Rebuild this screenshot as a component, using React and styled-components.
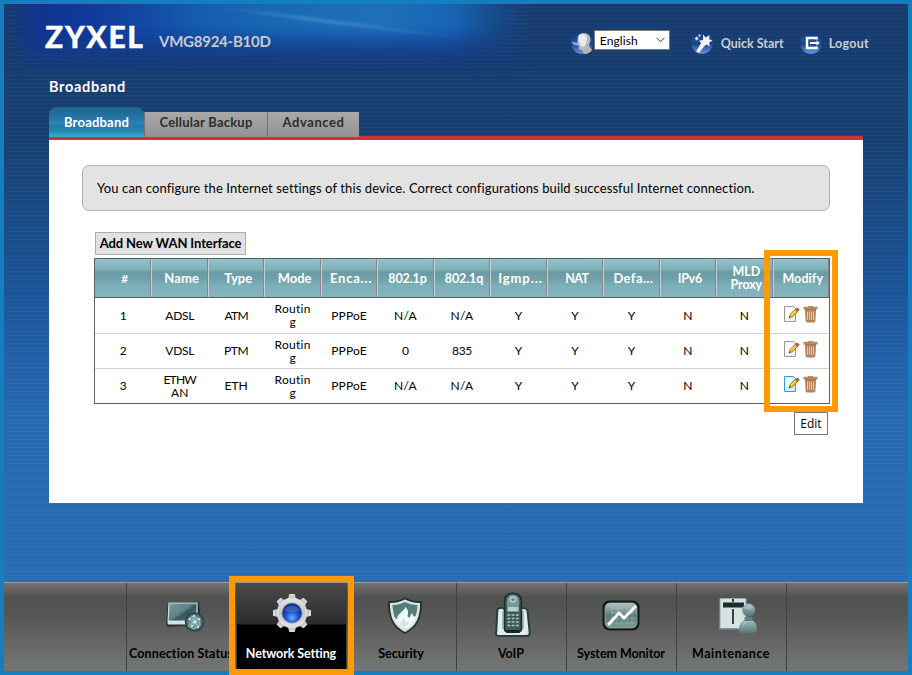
import React from "react";
import styled, { createGlobalStyle, css } from "styled-components";

const Global = createGlobalStyle`
  * { box-sizing: border-box; }
  body { margin: 0; font-family: "Century Gothic", Lato, "Open Sans", sans-serif; font-size: 12px; color: #000; }
  svg { display: block; flex: none; }
`;

const Screen = styled.div`
  width: 912px;
  height: 675px;
  display: flex;
  flex-direction: column;
  border: 4px solid #157ebf;
  background:
    repeating-linear-gradient(180deg, rgba(255, 255, 255, 0) 0 3px, rgba(255, 255, 255, 0.03) 3px 4px) padding-box,
    linear-gradient(180deg, #183c6f 0, #163f70 130px, #1c559a 290px, #276ab4 420px, #286cb5 578px) padding-box;
`;

const Text = styled.span`
  font-size: ${(p) => p.$size || 12}px;
  font-weight: ${(p) => (p.$bold ? 700 : 400)};
  letter-spacing: ${(p) => p.$track || 0}px;
  line-height: 13px;
  white-space: nowrap;
`;

const Header = styled.header`
  position: relative;
  isolation: isolate;
  height: 76px;
  flex: none;
  display: flex;
  justify-content: space-between;
  padding: 0 39px 0 41px;
`;

const Glow = styled.div`
  position: absolute;
  z-index: -1;
  left: 4px;
  top: 0;
  width: 526px;
  height: 76px;
  overflow: hidden;
  background: linear-gradient(180deg, rgba(15, 48, 150, 0) 20px, rgba(16, 54, 150, 0.9) 56px),
    linear-gradient(90deg, #10308a 0, #113a9b 90px, #155cae 190px, #1869b2 270px, #1f70ba 370px, #1763b2 460px, #154f9e 526px);
  mask-image: linear-gradient(90deg, transparent 0, #000 30px, #000 445px, transparent 524px),
    linear-gradient(180deg, #000 0, #000 30px, rgba(0, 0, 0, 0.55) 48px, transparent 70px);
  mask-composite: intersect;
`;

const Brand = styled.div`
  display: flex;
  align-items: flex-start;
`;

const Logo = styled.div`
  width: 114px;
  padding-top: 14px;
  color: #fff;
  font-family: Lato, sans-serif;
  font-size: 30px;
  font-weight: 900;
  line-height: 36px;
  letter-spacing: 1.7px;
  -webkit-text-stroke: 0.4px #fff;
`;

const Model = styled(Text)`
  padding-top: 31px;
  color: #c8cacd;
`;

const Tools = styled.div`
  display: flex;
  align-items: flex-start;
  padding-top: 26px;
  color: #c9cdd3;
`;

const Tool = styled.div`
  display: flex;
  align-items: ${(p) => (p.$select ? "flex-start" : "center")};
  gap: ${(p) => p.$gap}px;
  margin-left: ${(p) => p.$left || 0}px;
  padding-top: ${(p) => p.$top || 0}px;
`;

const UserBadge = styled.div`
  padding-top: 1px;
`;

const Select = styled.div`
  width: 76px;
  height: 20px;
  display: flex;
  align-items: center;
  justify-content: space-between;
  padding: 0 4px 0 5px;
  color: #000;
  background: #fff;
  border: 1px solid #7a7a7a;
`;

const Title = styled.h1`
  margin: -1px 0 0 45px;
  height: 28px;
  flex: none;
  font-size: 14.5px;
  line-height: 15px;
  letter-spacing: 0.7px;
  color: #fff;
`;

const Main = styled.main`
  width: 814px;
  margin-left: 45px;
  flex: none;
`;

const Tabs = styled.nav`
  display: flex;
  align-items: flex-end;
  height: 30px;
`;

const Tab = styled.div`
  width: ${(p) => p.$width}px;
  height: 25px;
  display: flex;
  justify-content: center;
  padding-top: 4px;
  color: #2d2d2d;
  background: linear-gradient(#a9a9a9, #929292);
  border-left: 1px solid #6f7276;
  ${(p) => p.$active && css`
    height: 30px;
    padding-top: 9px;
    color: #fff;
    border-left: 0;
    border-radius: 8px 8px 0 0;
    background: linear-gradient(#23638a 0, #206a94 10%, #2879ae 45%, #2f83b9 55%, #2278a8 62%, #2688b0 80%, #2fb0cf 100%);
  `}
`;

const Panel = styled.section`
  height: 366px;
  padding: 25px 33px 0;
  background: #fff;
  border-top: 3px solid #d23034;
`;

const RedCap = styled.div`
  flex: 1;
  height: 1px;
  background: #d23034;
`;

const Note = styled.div`
  height: 46px;
  display: flex;
  align-items: center;
  padding: 1px 14px 0;
  background: #e3e3e3;
  border: 1px solid #b2b2b2;
  border-radius: 7px;
`;

const AddButton = styled.button`
  display: flex;
  align-items: center;
  justify-content: center;
  width: 151px;
  height: 23px;
  margin: 21px 0 3px 13px;
  padding: 0;
  background: #e1e1e1;
  border: 1px solid #adadad;
  font-family: inherit;
  color: #000;
`;

const TableWrap = styled.div`
  position: relative;
  width: 736px;
  margin-left: 12px;
`;

const Table = styled.div`
  border: 1px solid #5c5f61;
`;

const Row = styled.div`
  display: grid;
  grid-template-columns: repeat(13, 1fr);
  height: 35px;
  border-top: ${(p) => (p.$first ? "0" : "1px solid #d3d3d3")};
`;

const HeadRow = styled(Row)`
  height: 39px;
  border-top: 0;
  color: #fff;
  background: linear-gradient(#93c2cb 0, #7fb0b8 28%, #6b9ba5 34%, #6f9fa8 50%, #7db0b9 70%, #84b4bd 100%);
  border-bottom: 1px solid #5c5f61;
`;

const HeadCell = styled.div`
  display: flex;
  flex-direction: column;
  align-items: center;
  justify-content: center;
  padding-left: 4px;
  border-left: 1px solid #c9d0d1;
  border-right: 1px solid #8b8385;
  &:first-child { border-left: 0; }
`;

const Cell = styled.div`
  display: flex;
  flex-direction: column;
  align-items: center;
  justify-content: center;
  padding-bottom: 1px;
`;

const Actions = styled(Cell)`
  flex-direction: row;
  gap: 3px;
  padding: 0 0 4px 1px;
`;

const Highlight = styled.div`
  position: absolute;
  border: 6px solid #ff9908;
  ${(p) => p.$kind === "column"
    ? css`left: 670px; top: -8px; width: 74px; height: 162px;`
    : css`left: -8px; top: -7px; width: 125px; height: 99px; z-index: 2;`}
`;

const Tooltip = styled.div`
  position: absolute;
  left: 700px;
  top: 154px;
  width: 34px;
  height: 23px;
  display: flex;
  align-items: center;
  justify-content: center;
  border: 1px solid #767676;
  background: #fff;
  font-family: "Segoe UI", "Open Sans", sans-serif;
`;

const Footer = styled.footer`
  height: 89px;
  flex: none;
  margin-top: auto;
  display: flex;
  padding-left: 122px;
  border-top: 1px solid #999;
  background: linear-gradient(#737373 0, #505250 16%, #535553 32%, #767676 100%);
`;

const NavItem = styled.div`
  position: relative;
  width: 110px;
  display: flex;
  flex-direction: column;
  align-items: center;
  padding-right: 1px;
  border-left: 1px solid #414141;
  ${(p) => p.$active && css`
    color: #fff;
    background: linear-gradient(#4b4b4b 0, #2b2b2b 41px, #000 42px);
    z-index: 1;
  `}
`;

const NavIcon = styled.div`
  height: 64px;
  display: flex;
  align-items: center;
  padding-left: ${(p) => p.$shift || 0}px;
  padding-bottom: ${(p) => p.$lift || 0}px;
  padding-top: 2px;
`;

const NavEnd = styled.div`
  border-left: 1px solid #414141;
`;

const Orb = ({ id, children }) => (
  <svg width="24" height="24" viewBox="0 0 24 24">
    <defs>
      <linearGradient id={id} x1="0" y1="0" x2="0" y2="1">
        <stop offset="0" stopColor="#123a80" />
        <stop offset=".42" stopColor="#254f9d" />
        <stop offset=".5" stopColor="#173c83" />
        <stop offset="1" stopColor="#6797e4" />
      </linearGradient>
    </defs>
    <circle cx="12" cy="12" r="10.8" fill={`url(#${id})`} />
    {children}
  </svg>
);

const UserIcon = () => (
  <Orb id="orbUser">
    <path d="M1 10.500l7 1.500 4 3-8-1z" fill="#83aade" />
    <path d="M8 5c2-4 11-4 12 1 1 3 0 6-1 8l1 3c1 0 2 1 2 2-1 2-4 4-8 4l-2-4c-3 0-4-1-3-4l-2-2c1-3 0-5 1-8z" fill="#b4b7bc" />
    <path d="M9 4.500c3-3 8-1 8 2s-1 7-3 9.500c-2-.5-4-1-4-3l-1.500-2z" fill="#ecebe9" />
  </Orb>
);

const WandIcon = () => (
  <Orb id="orbWand">
    <path d="M13 3.500l2.700 3L19.500 4l-.3 4.200 3.300 1.300-3.300 2 .6 4-3.300-2-1.600 1-6 7.500-2.800-1.500 5-8.500-2-2.200 4-.8z" fill="#f1f3f6" />
    <path d="M6.700 5.800v3.400M5 7.500h3.400M9.500 3.500v2M8.500 4.500h2" stroke="#dce8fb" strokeWidth="1.500" />
  </Orb>
);

const LogoutIcon = () => (
  <Orb id="orbOut">
    <path d="M17.500 8.500v-1.500h-9.500v10h9.500v-1.500" fill="none" stroke="#fff" strokeWidth="2.500" />
    <path d="M11 12h7" stroke="#fff" strokeWidth="2" />
    <path d="M17.500 9.200l3.300 2.800-3.300 2.800z" fill="#fff" />
  </Orb>
);

const EditIcon = ({ blue }) => (
  <svg width="16" height="18" viewBox="0 0 16 18">
    <path d="M.5 1.500h9l2 2v13H.5z" fill={blue ? "#d4edfc" : "#f2f2f2"} stroke={blue ? "#3b9adb" : "#999"} />
    <path d="M2 3h6v4L2 14z" fill={blue ? "#f3fbff" : "#fff"} />
    <path d="M5.300 12.700l.8-3.300 6.400-6.200 2.300 2.300-6.400 6.300z" fill="#edbf2b" stroke="#7d5116" strokeWidth=".7" />
    <path d="M7 10l6-5.800" stroke="#ffec87" />
    <path d="M11.500 4.100l1.800-1.700 2.300 2.100-1.800 2z" fill="#b55d46" />
    <path d="M11.200 4.500l2.200 2.200" stroke="#565f6b" strokeWidth="1" />
    <path d="M5 13l.3-1.400 1.100 1z" fill="#222" />
  </svg>
);

const TrashIcon = () => (
  <svg width="15" height="18" viewBox="0 0 15 18">
    <path d="M.5 1.800h4.500V1h5v.8h4.500v2H.5z" fill="#bf8a5a" />
    <path d="M2 4h11v1.200l-.6 10.800-1 1.500H3.600l-1-1.500L2 5.200z" fill="#b58259" />
    <path d="M4.500 6.500v8.500M6.500 6.500v8.500M8.500 6.500v8.500M10.500 6.500v8.500" stroke="#e8d0b8" strokeWidth=".9" />
    <path d="M.5 4h14" stroke="#966440" strokeWidth=".8" />
  </svg>
);

const StatusIcon = () => (
  <svg width="40" height="34" viewBox="0 0 40 34">
    <defs><linearGradient id="scr" x1="0" y1="0" x2="1" y2="1"><stop stopColor="#7b9ba0" /><stop offset=".45" stopColor="#5d8388" /><stop offset=".55" stopColor="#36565b" /><stop offset="1" stopColor="#557d83" /></linearGradient>
      <radialGradient id="globe"><stop stopColor="#a9c5c8" /><stop offset="1" stopColor="#3c6068" /></radialGradient></defs>
    <path d="M3 3h31l2 23-33 2L1 25z" fill="#243033" />
    <path d="M4 4h28v20H3z" fill="url(#scr)" stroke="#d6e3e4" strokeWidth="1.200" />
    <path d="M3 21.500h27v4H3z" fill="#d7e3e3" />
    <circle cx="29.500" cy="23" r="9" fill="url(#globe)" stroke="#2b4247" strokeWidth="1.500" />
    <path d="M23 21l5-4 6 3 1 6-6 4-6-3 5-3 5-4M28 17l1 6 5 4" fill="none" stroke="#a8c4c7" strokeWidth=".8" />
    <g fill="#e5f2f2"><circle cx="25" cy="20" r="1.100" /><circle cx="30" cy="23" r="1.300" /><circle cx="34" cy="20" r="1" /><circle cx="27" cy="27" r="1.100" /><circle cx="33" cy="28" r="1.100" /><circle cx="29" cy="17" r="1" /></g>
  </svg>
);

const GearIcon = () => (
  <svg width="40" height="40" viewBox="-20 -20 40 40">
    <defs><linearGradient id="metal" x1="0" y1="0" x2="0" y2="1"><stop stopColor="#e7e7e7" /><stop offset=".5" stopColor="#c4c4c4" /><stop offset="1" stopColor="#e6e6e6" /></linearGradient>
      <radialGradient id="ball" cy=".75"><stop stopColor="#62adff" /><stop offset=".6" stopColor="#2459cf" /><stop offset="1" stopColor="#173695" /></radialGradient></defs>
    <g fill="url(#metal)">
      <circle r="15.200" />
      {[0, 45, 90, 135, 180, 225, 270, 315].map((a) => (
        <path key={a} d="M-4.200-13.200L-2.700-19H2.700L4.200-13.200z" transform={`rotate(${a})`} />
      ))}
    </g>
    <circle r="10.400" fill="#8795a8" />
    <circle r="9.700" fill="url(#ball)" />
    <path d="M-7.500-2.500C-6-8.500 6-8.500 7.500-2.500 4-.5-4-.5-7.500-2.500z" fill="#719ce8" opacity=".35" />
  </svg>
);

const ShieldIcon = () => (
  <svg width="36" height="38" viewBox="0 0 36 38">
    <path d="M18 1.500c5 2.800 10 3.700 16 3.500C34 20 31 29.500 18 36 5 29.500 2 20 2 5c6 .2 11-.7 16-3.500z" fill="#d9e5e5" stroke="#24302f" strokeWidth="1.800" />
    <path d="M18 5c4 2 8 3 12.500 3C30 19 27 26.500 18 32 9 26.500 6 19 5.500 8 10 8 14 7 18 5z" fill="#537c7b" />
    <path d="M6.500 19c1 2 2 3 4 3-1-3 1-4 3-6 2-3 4-3 5-6 3 3 3 6 2 9l2 2c1-2 1-4 3-5 0 3 1 4 4 3-2 6-5 10-11.500 13C12 29 8 24.500 6.500 19z" fill="#f2f9f8" />
    <path d="M13 28c0-3 3-4 4-7 2 2 1 4 2 5l3-2c0 3-2 5-5 6z" fill="#d3e4e2" />
  </svg>
);

const PhoneIcon = () => (
  <svg width="38" height="48" viewBox="0 0 34 48" preserveAspectRatio="none">
    <path d="M3 19c0-2 5-3 6-1h15c2-2 6 0 6 2l2 22c0 2-1 3-3 3H5c-3 0-4-2-3-4z" fill="#e3ecec" stroke="#283c3c" strokeWidth="1.800" />
    <path d="M8 20v18M26 20v18" stroke="#a3b6b5" strokeWidth="1.600" />
    <path d="M9.500 9C10 0 24 0 24.500 9v30c0 3-15 3-15 0z" fill="#3d5b5b" stroke="#1d2e2e" strokeWidth="1.500" />
    <path d="M11.500 9c1-7 10-7 11 0v6h-11z" fill="#759895" />
    <circle cx="17" cy="8.500" r="3.200" fill="#b4cbc9" /><circle cx="17" cy="8.500" r="1.600" fill="#648885" />
    <path d="M12 15.500h10v5H12z" fill="#b5cfcc" />
    {[24, 27.5, 31, 34.5].map((y) => <path key={y} d={`M12 ${y}h2.500M15.800 ${y}h2.500M19.600 ${y}h2.500`} stroke="#aec7c4" strokeWidth="1.700" />)}
    <path d="M11 39h12v3H11z" fill="#152525" />
  </svg>
);

const MonitorIcon = () => (
  <svg width="40" height="34" viewBox="0 0 40 34">
    <defs><linearGradient id="mon" x1="0" y1="0" x2="0" y2="1"><stop stopColor="#b4c6c6" /><stop offset=".5" stopColor="#5c7778" /><stop offset="1" stopColor="#7b9897" /></linearGradient></defs>
    <rect x="1.500" y="1.500" width="37" height="30" rx="7" fill="#121918" />
    <rect x="4" y="4" width="32" height="25" rx="5" fill="url(#mon)" stroke="#9eb3b2" strokeWidth=".7" />
    <path d="M10 9h24M10 14h24M10 19h24M10 24h24M11 7v19M16 7v19M21 7v19M26 7v19M31 7v19" stroke="#c5d6d5" strokeWidth=".5" opacity=".7" />
    <path d="M7 26L18 14l5 5L35 7" fill="none" stroke="#fff" strokeWidth="2.800" />
  </svg>
);

const MaintenanceIcon = () => (
  <svg width="38" height="38" viewBox="0 0 38 38">
    <defs><linearGradient id="body" x1="0" y1="0" x2="0" y2="1"><stop stopColor="#a4bdbe" /><stop offset="1" stopColor="#557579" /></linearGradient></defs>
    <path d="M1 1.500h26v31H1z" fill="#d8e1e1" stroke="#99acad" />
    <path d="M4 5.500h21v5H4z" fill="#1c2c2c" />
    <path d="M14 2v3M14 12v15" stroke="#304244" strokeWidth="2" />
    <path d="M1 32h24" stroke="#374749" />
    <path d="M20 35c-1-7 3-11 5-12h8c4 2 6 7 4 12-4 2-13 2-17 0z" fill="url(#body)" />
    <circle cx="29.500" cy="13" r="6.500" fill="url(#body)" />
    <path d="M25.500 20h8v4h-8z" fill="#5f8084" />
    <path d="M25 11c2-5 8-4 9 0-2 2-7 2-9 0zM23 30c1-5 3-6 6-6" fill="#afc7c8" opacity=".65" />
  </svg>
);

const LightStreak = () => (
  <svg width="526" height="76" viewBox="8 4 526 76">
    <defs>
      <linearGradient id="streak"><stop offset=".1" stopColor="#7cb9e6" stopOpacity="0" /><stop offset=".45" stopColor="#7cb9e6" stopOpacity=".4" /><stop offset="1" stopColor="#7cb9e6" stopOpacity="0" /></linearGradient>
      <filter id="soft"><feGaussianBlur stdDeviation="1" /></filter>
    </defs>
    <path d="M170 2C250 10 340 24 500 41 400 33 300 20 170 2z" fill="url(#streak)" filter="url(#soft)" />
    <path d="M200 3C270 13 340 21 440 34" fill="none" stroke="url(#streak)" strokeWidth="1" filter="url(#soft)" />
  </svg>
);

const columns = [
  { name: "#" }, { name: "Name", size: 13, track: 0.1 }, { name: "Type", size: 13 }, { name: "Mode", size: 13 },
  { name: "Enca...", size: 13, track: 0.8 }, { name: "802.1p", size: 12.5, track: -0.1 }, { name: "802.1q", size: 12.5, track: -0.1 },
  { name: "Igmp...", size: 13, track: 0.9 }, { name: "NAT", size: 12.5, track: -0.6 }, { name: "Defa...", size: 13, track: 0.4 },
  { name: "IPv6", size: 12.5, track: -0.3 }, { name: "MLD|Proxy", size: 12.5, track: -0.1 }, { name: "Modify", size: 12.5, track: 0.1 },
];

const rows = [
  ["1", "ADSL", "ATM", "Routin|g", "PPPoE", "N/A", "N/A", "Y", "Y", "Y", "N", "N"],
  ["2", "VDSL", "PTM", "Routin|g", "PPPoE", "0", "835", "Y", "Y", "Y", "N", "N"],
  ["3", "ETHW|AN", "ETH", "Routin|g", "PPPoE", "N/A", "N/A", "Y", "Y", "Y", "N", "N"],
];

const tracking = { ADSL: -0.3, VDSL: -0.3, ATM: -0.7, PTM: -0.4, ETHW: -0.8, Routin: 0.25, PPPoE: 0.15, "N/A": 0.4, 835: -0.3 };

const nav = [
  { label: "Connection Status", icon: StatusIcon, track: 0.12, shift: 7 },
  { label: "Network Setting", icon: GearIcon, track: -0.1, active: true, shift: 1, lift: 6 },
  { label: "Security", icon: ShieldIcon, shift: 7 },
  { label: "VoIP", icon: PhoneIcon, shift: 3, lift: 3 },
  { label: "System Monitor", icon: MonitorIcon, track: -0.06 },
  { label: "Maintenance", icon: MaintenanceIcon, track: 0.5, shift: 14 },
];

export default function App() {
  return (
    <>
      <Global />
      <Screen>
        <Header>
          <Glow><LightStreak /></Glow>
          <Brand>
            <Logo>ZYXEL</Logo>
            <Model $size={15} $bold $track={-0.25}>VMG8924-B10D</Model>
          </Brand>
          <Tools>
            <Tool $gap={0} $select>
              <UserBadge><UserIcon /></UserBadge>
              <Select>
                <Text $track={0.1}>English</Text>
                <svg width="9" height="6" viewBox="0 0 9 6"><path d="M.5.8l4 4 4-4" fill="none" stroke="#333" /></svg>
              </Select>
            </Tool>
            <Tool $gap={7} $left={20} $top={1}>
              <WandIcon />
              <Text $size={12.5} $bold>Quick Start</Text>
            </Tool>
            <Tool $gap={6} $left={15} $top={1}>
              <LogoutIcon />
              <Text $size={12.5} $bold $track={0.28}>Logout</Text>
            </Tool>
          </Tools>
        </Header>
        <Title>Broadband</Title>
        <Main>
          <Tabs>
            <Tab $active $width={95}><Text $size={13} $bold $track={0.2}>Broadband</Text></Tab>
            <Tab $width={123}><Text $size={13} $bold $track={0.22}>Cellular Backup</Text></Tab>
            <Tab $width={92}><Text $size={13} $bold $track={0.55}>Advanced</Text></Tab>
            <RedCap />
          </Tabs>
          <Panel>
            <Note>
              <Text $size={13} $track={0.108}>You can configure the Internet settings of this device. Correct configurations build successful Internet connection.</Text>
            </Note>
            <AddButton><Text $size={13} $bold $track={-0.11}>Add New WAN Interface</Text></AddButton>
            <TableWrap>
              <Table>
                <HeadRow>
                  {columns.map((c) => (
                    <HeadCell key={c.name}>
                      {c.name.split("|").map((line) => <Text key={line} $bold $size={c.size} $track={c.track}>{line}</Text>)}
                    </HeadCell>
                  ))}
                </HeadRow>
                {rows.map((row, i) => (
                  <Row key={row[0]} $first={i === 0}>
                    {row.map((value, j) => (
                      <Cell key={j}>
                        {value.split("|").map((line) => <Text key={line} $track={tracking[line]}>{line}</Text>)}
                      </Cell>
                    ))}
                    <Actions><EditIcon blue={i === 2} /><TrashIcon /></Actions>
                  </Row>
                ))}
              </Table>
              <Highlight $kind="column" />
              <Tooltip><Text>Edit</Text></Tooltip>
            </TableWrap>
          </Panel>
        </Main>
        <Footer>
          {nav.map(({ label, icon: Icon, track, active, shift, lift }) => (
            <NavItem key={label} $active={active}>
              <NavIcon $shift={shift} $lift={lift}><Icon /></NavIcon>
              <Text $size={12.5} $bold $track={track}>{label}</Text>
              {active && <Highlight $kind="nav" />}
            </NavItem>
          ))}
          <NavEnd />
        </Footer>
      </Screen>
    </>
  );
}
